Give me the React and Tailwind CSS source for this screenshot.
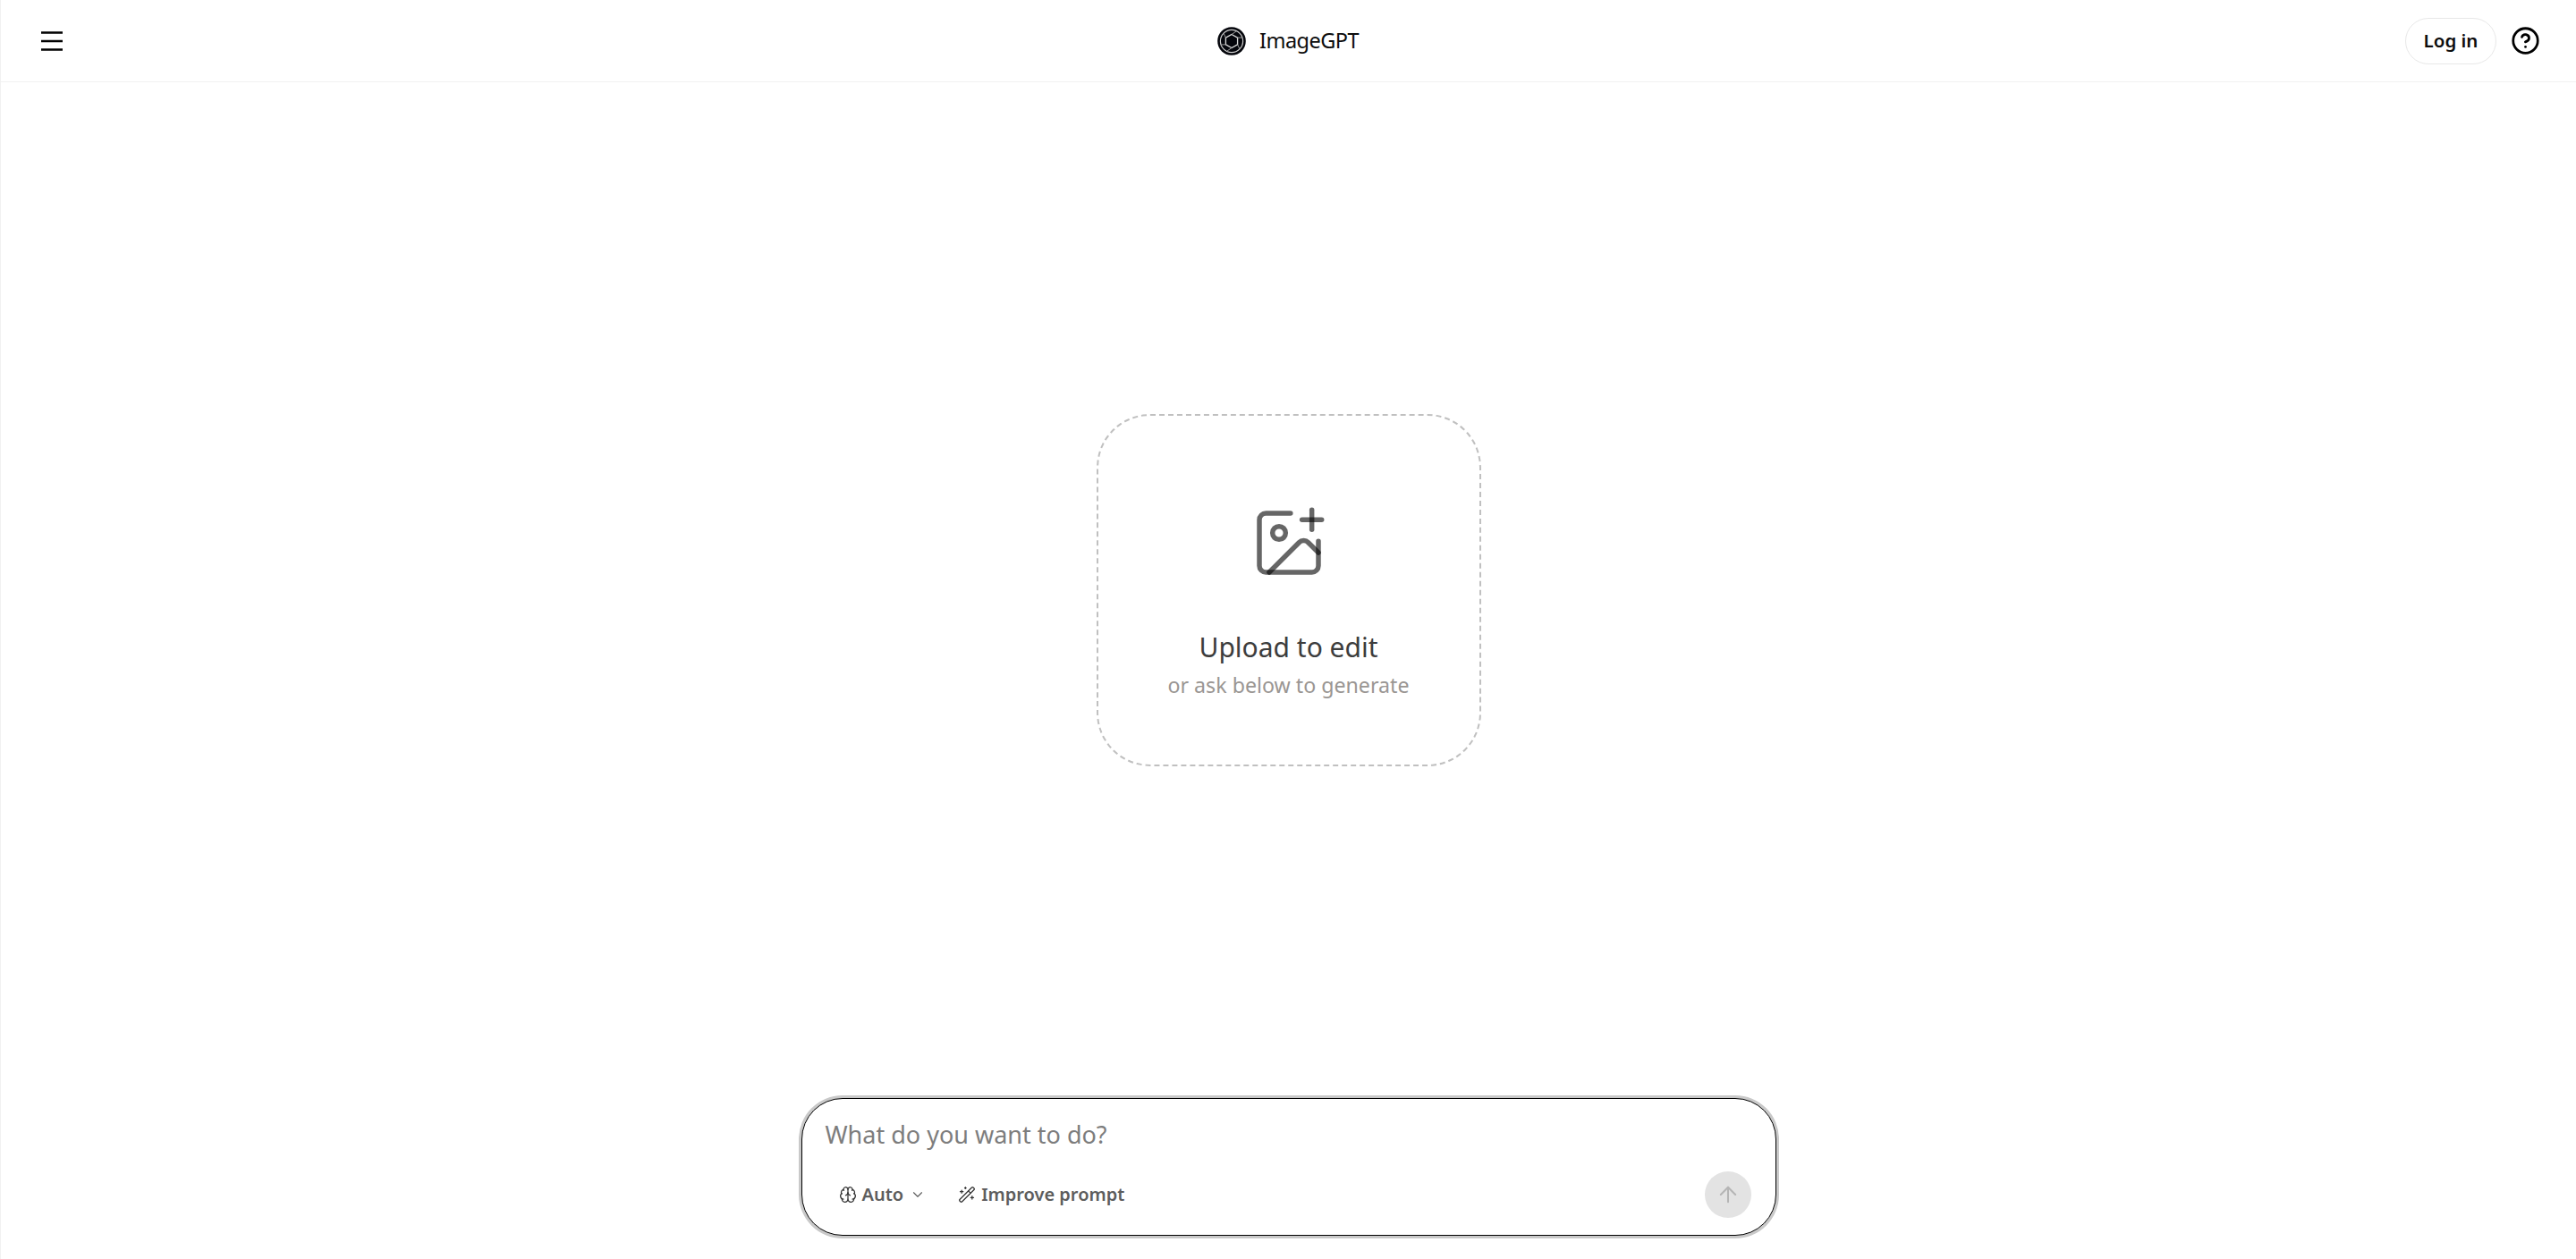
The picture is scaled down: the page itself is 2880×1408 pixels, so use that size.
import { ArrowUp, Brain, ChevronDown, CircleHelp, ImagePlus, WandSparkles } from "lucide-react"

function ShutterLogo() {
  return (
    <svg width="32" height="32" viewBox="0 0 32 32" fill="none">
      <circle cx="16" cy="16" r="15.8" fill="#05060c" />
      <circle cx="16" cy="16" r="12.6" stroke="#d0d0d0" strokeWidth="1.2" />
      <path d="M16 8.5 22.6 12.2 22.6 19.8 16 23.5 9.4 19.8 9.4 12.2z" stroke="#dcdcdc" strokeWidth="1.3" />
      <path d="M16 8.5 21 5M22.6 12.2 28 12M22.6 19.8 25 25M16 23.5 11 27M9.4 19.8 4 20M9.4 12.2 7 7" stroke="#9a9a9a" strokeWidth="1" />
      <circle cx="16" cy="16" r="4.8" fill="#05060c" />
    </svg>
  )
}

function Header() {
  return (
    <header className="h-[92px] shrink-0 border-b border-[#f1f1f1] grid grid-cols-3 items-center pl-[43px] pr-[40px]">
      <div>
        <button className="block">
          <svg width="28" height="24" viewBox="0 0 28 24" fill="none" stroke="#000" strokeWidth="2.4">
            <path d="M2 2.5h24M2 12h24M2 21.5h24" />
          </svg>
        </button>
      </div>
      <div className="flex items-center justify-center gap-[15px] mr-[4px]">
        <ShutterLogo />
        <span className="text-[23.5px] tracking-[-0.55px] text-[#0d0d0d]">ImageGPT</span>
      </div>
      <div className="flex items-center justify-end gap-[16px]">
        <button className="h-[52px] w-[102px] rounded-full border border-[#e8e8e8] text-[20.5px] font-semibold text-[#0d0d0d]">
          Log in
        </button>
        <CircleHelp size={33} strokeWidth={2} color="#000" />
      </div>
    </header>
  )
}

function UploadCard() {
  return (
    <div className="w-[430px] h-[394px] rounded-[60px] border-2 border-dashed border-[#c0c0c0] flex flex-col items-center pt-[98px]">
      <ImagePlus size={88} strokeWidth={1.5} color="#000" strokeOpacity={0.6} />
      <div className="mt-[51px] text-[30px] leading-[44px] text-[#3d3d3d]">Upload to edit</div>
      <div className="mt-[2px] text-[23.2px] leading-[36px] text-[#9a9693]">or ask below to generate</div>
    </div>
  )
}

function PromptBox() {
  return (
    <div className="w-[1090px] h-[154px] rounded-[46px] border border-black ring-[3px] ring-[#c9c9c9] bg-white flex flex-col pl-[26px] pr-[27px] pt-[20px]">
      <div className="text-[27px] leading-[40px] text-[#7d7d7d]">What do you want to do?</div>
      <div className="mt-[21px] flex items-center text-[#5d5d5d] text-[20px] font-semibold">
        <div className="flex items-center ml-[15px]">
          <Brain size={20} strokeWidth={1.5} color="#333" />
          <span className="ml-[6px]">Auto</span>
          <ChevronDown size={18} strokeWidth={1.5} className="ml-[7px]" />
        </div>
        <div className="flex items-center ml-[36px]">
          <WandSparkles size={20} strokeWidth={1.5} color="#333" />
          <span className="ml-[6px]">Improve prompt</span>
        </div>
        <button className="ml-auto w-[52px] h-[52px] rounded-full bg-[#e3e3e3] flex items-center justify-center">
          <ArrowUp size={28} strokeWidth={1.75} color="#b5b5b5" />
        </button>
      </div>
    </div>
  )
}

export default function App() {
  return (
    <div className="h-screen flex flex-col bg-white border-l border-[#f1f1f1] font-['Noto_Sans',sans-serif]">
      <Header />
      <main className="flex-1 flex items-center justify-center">
        <UploadCard />
      </main>
      <div className="flex justify-center pb-[26px]">
        <PromptBox />
      </div>
    </div>
  )
}
